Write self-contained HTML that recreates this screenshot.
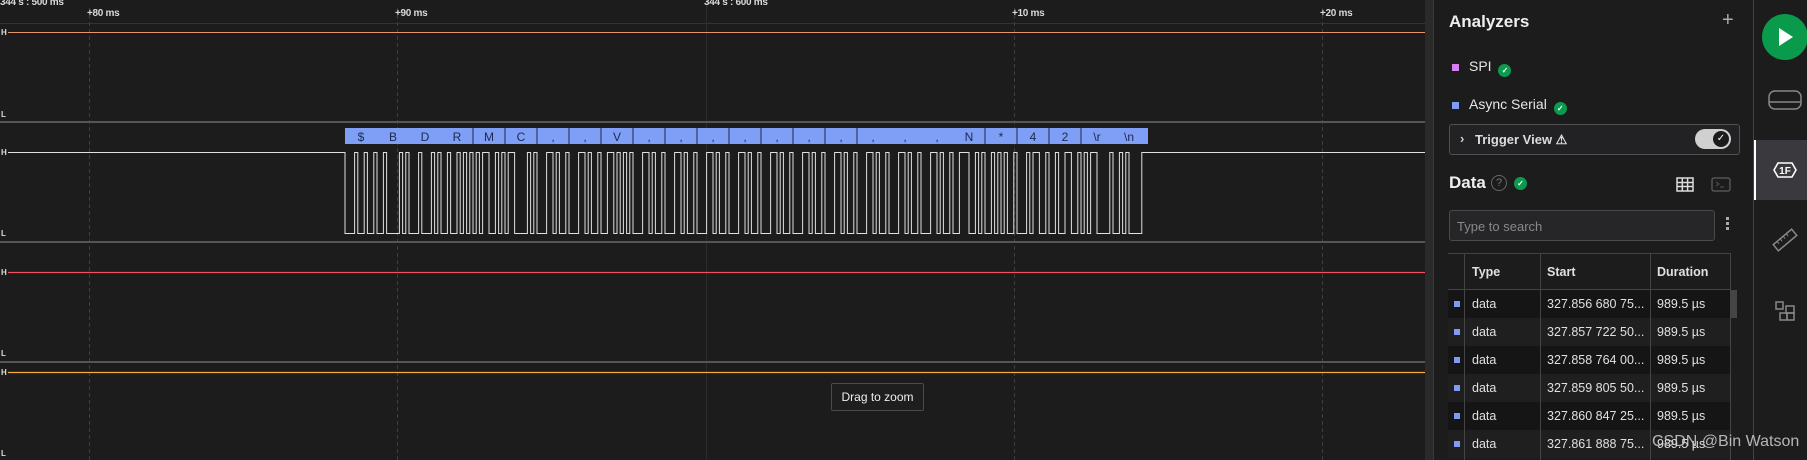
<!DOCTYPE html>
<html><head><meta charset="utf-8"><style>
*{margin:0;padding:0;box-sizing:border-box}
body{width:1807px;height:460px;background:#1c1c1c;overflow:hidden;position:relative;font-family:"Liberation Sans",sans-serif;color:#e6e6e6}
.abs{position:absolute}
.tl{font-size:10px;font-weight:bold;color:#d8d8d8;letter-spacing:-0.3px}
.hl{font-size:8px;font-weight:bold;color:#ddd}
.panel{left:1433px;top:0;width:320px;height:460px;background:#1c1c1c;border-left:1px solid #3a3a3a}
.side{left:1753px;top:0;width:54px;height:460px;background:#1c1c1c;border-left:1px solid #444}
.chk{width:13px;height:13px;border-radius:50%;background:#0c9b4e;display:inline-block;color:#fff;font-size:8px;line-height:13px;text-align:center;font-weight:bold}
.row{position:absolute;left:1448px;width:282px;height:28px;font-size:12.5px;color:#e0e0e0}
.row span{position:absolute;top:7px}
</style></head><body>
<svg class="abs" style="left:0;top:0" width="1433" height="460">
<line x1="0" y1="23.5" x2="1425" y2="23.5" stroke="#333" stroke-width="1"/>
<g stroke="#3d3d3d" stroke-width="1" stroke-dasharray="4,3">
<line x1="89.5" y1="8" x2="89.5" y2="460"/>
<line x1="397.5" y1="8" x2="397.5" y2="460"/>
<line x1="1014.5" y1="8" x2="1014.5" y2="460"/>
<line x1="1322.5" y1="8" x2="1322.5" y2="460"/>
</g>
<line x1="706.5" y1="0" x2="706.5" y2="460" stroke="#2c2c2c" stroke-width="1"/>
<rect x="0" y="121" width="1425" height="2" fill="#555"/>
<rect x="0" y="241" width="1425" height="2" fill="#555"/>
<rect x="0" y="361" width="1425" height="2" fill="#555"/>
<line x1="8" y1="32.5" x2="1425" y2="32.5" stroke="#e8946a" stroke-width="1"/>
<line x1="8" y1="272.5" x2="1425" y2="272.5" stroke="#f0505a" stroke-width="1.2"/>
<line x1="8" y1="372.5" x2="1425" y2="372.5" stroke="#f5a742" stroke-width="1.2"/>
<path id="wave" d="" fill="none" stroke="#e0e0e0" stroke-width="1"/>
<g id="bar"></g>
<rect x="1425" y="0" width="8" height="460" fill="#2a2a2a"/>
</svg>
<div class="abs tl" style="left:0;top:-3px">344 s : 500 ms</div>
<div class="abs tl" style="left:87px;top:8px">+80 ms</div>
<div class="abs tl" style="left:395px;top:8px">+90 ms</div>
<div class="abs tl" style="left:704px;top:-3px">344 s : 600 ms</div>
<div class="abs tl" style="left:1012px;top:8px">+10 ms</div>
<div class="abs tl" style="left:1320px;top:8px">+20 ms</div>
<div class="abs hl" style="left:1px;top:28px">H</div><div class="abs hl" style="left:1px;top:110px">L</div>
<div class="abs hl" style="left:1px;top:148px">H</div><div class="abs hl" style="left:1px;top:229px">L</div>
<div class="abs hl" style="left:1px;top:268px">H</div><div class="abs hl" style="left:1px;top:349px">L</div>
<div class="abs hl" style="left:1px;top:368px">H</div><div class="abs hl" style="left:1px;top:449px">L</div>
<div class="abs" style="left:831px;top:383px;width:93px;height:28px;background:#1e1e1e;border:1px solid #4a4a4e;border-radius:2px;font-size:12px;color:#eee;text-align:center;line-height:26px">Drag to zoom</div>

<div class="abs panel">
 <div class="abs" style="left:15px;top:12px;font-size:17px;font-weight:bold;color:#eee">Analyzers</div>
 <div class="abs" style="left:288px;top:9px;font-size:20px;color:#aaa">+</div>
 <div class="abs" style="left:18px;top:64px;width:7px;height:7px;background:#d77ef2"></div>
 <div class="abs" style="left:35px;top:58px;font-size:14px">SPI <span class="chk" style="vertical-align:-2px;margin-left:3px">✓</span></div>
 <div class="abs" style="left:18px;top:102px;width:7px;height:7px;background:#7f9cf5"></div>
 <div class="abs" style="left:35px;top:96px;font-size:14px">Async Serial <span class="chk" style="vertical-align:-2px;margin-left:3px">✓</span></div>
 <div class="abs" style="left:15px;top:124px;width:291px;height:31px;border:1px solid #505050;border-radius:3px;background:#222224">
  <div class="abs" style="left:10px;top:6px;font-size:13px;color:#ccc;font-weight:bold">›</div>
  <div class="abs" style="left:25px;top:7px;font-size:13px;font-weight:bold;color:#ddd">Trigger View ⚠</div>
  <div class="abs" style="left:245px;top:4px;width:36px;height:20px;border-radius:10px;background:#d0d0d0"><div class="abs" style="left:18px;top:2px;width:16px;height:16px;border-radius:50%;background:#1c1c1c;color:#fff;font-size:10px;text-align:center;line-height:16px">✓</div></div>
 </div>
 <div class="abs" style="left:15px;top:173px;font-size:17px;font-weight:bold;color:#eee">Data</div>
 <div class="abs" style="left:57px;top:175px;width:16px;height:16px;border:1px solid #666;border-radius:50%;font-size:11px;color:#777;text-align:center;line-height:14px">?</div>
 <div class="abs chk" style="left:80px;top:177px">✓</div>
 <svg class="abs" style="left:240px;top:176px" width="60" height="18"><g fill="none" stroke="#ddd" stroke-width="1.5"><rect x="3" y="2" width="16" height="13"/><path d="M3 6.5h16M3 10.5h16M8.3 2v13M13.6 2v13"/></g><rect x="38" y="2" width="18" height="13" rx="2" fill="none" stroke="#555" stroke-width="1.5"/><path d="M42 6l3 2-3 2M46 11h4" stroke="#555" fill="none"/></svg>
 <div class="abs" style="left:15px;top:210px;width:266px;height:31px;background:#262628;border:1px solid #4a4a4a;border-radius:3px;font-size:13px;color:#888;padding:8px 7px">Type to search</div>
 <div class="abs" style="left:292px;top:217px;width:3px;height:3px;background:#aaa;box-shadow:0 5px #aaa,0 10px #aaa"></div>
</div>

<div class="abs" style="left:1448px;top:253px;width:282px;height:1px;background:#444"></div>
<div class="abs" style="left:1448px;top:289px;width:282px;height:1px;background:#444"></div>
<div class="row" style="top:254px;height:35px;font-weight:bold;font-size:12.5px"><span style="left:24px;top:11px">Type</span><span style="left:99px;top:11px">Start</span><span style="left:209px;top:11px">Duration</span></div>
<div id="rows"></div>
<div class="abs" style="left:1464px;top:253px;width:1px;height:207px;background:#444"></div>
<div class="abs" style="left:1540px;top:253px;width:1px;height:207px;background:#444"></div>
<div class="abs" style="left:1650px;top:253px;width:1px;height:207px;background:#444"></div>
<div class="abs" style="left:1730px;top:253px;width:1px;height:207px;background:#444"></div>
<div class="abs" style="left:1730px;top:290px;width:7px;height:28px;background:#454545"></div>

<div class="abs side">
 <div class="abs" style="left:8px;top:14px;width:46px;height:46px;border-radius:50%;background:#0a9a4c"></div>
 <svg class="abs" style="left:0;top:0" width="54" height="340">
  <path d="M25 28v18l14-9z" fill="#fff"/>
  <rect x="15" y="91" width="32" height="18" rx="6" fill="none" stroke="#888" stroke-width="1.5"/><line x1="15" y1="102" x2="47" y2="102" stroke="#888" stroke-width="1.5"/>
  <rect x="0" y="140" width="54" height="60" fill="#3a3a3e"/><rect x="0" y="140" width="2" height="60" fill="#fff"/>
  <path d="M20 170l4-7h14l4 7-4 7H24z" fill="none" stroke="#fff" stroke-width="1.6"/>
  <text x="31" y="174" font-size="10" font-weight="bold" fill="#fff" text-anchor="middle" font-family="Liberation Sans">1F</text>
  <g transform="translate(31,240) rotate(-40)"><rect x="-12" y="-4" width="24" height="8" fill="none" stroke="#888" stroke-width="1.5"/><path d="M-7-4v3M-3-4v3M1-4v3M5-4v3" stroke="#888"/></g>
  <rect x="22" y="302" width="7" height="7" fill="none" stroke="#888" stroke-width="1.5"/><rect x="32" y="306" width="8" height="7" fill="none" stroke="#888" stroke-width="1.5"/><rect x="26" y="313" width="7" height="7" fill="none" stroke="#888" stroke-width="1.5"/><rect x="33" y="313" width="7" height="7" fill="none" stroke="#888" stroke-width="1.5"/>
 </svg>
</div>
<div class="abs" style="left:1652px;top:433px;font-size:16px;color:#d0d0d0;opacity:.85;z-index:10;white-space:nowrap">CSDN @Bin Watson</div>
<script>
var chars=['$','B','D','R','M','C',',',',','V',',',',',',',',',',',',',',',',',',',',','N','*','4','2','\r','\n'];
var x0=345,bw=3.2,hi=152.5,lo=233.5,d='M8 '+hi+' L'+x0+' '+hi,cur=1,x=x0;
chars.forEach(function(c,i){var b=c.charCodeAt(0);var bits=[0];for(var k=0;k<8;k++)bits.push((b>>k)&1);bits.push(1);
 bits.forEach(function(v,j){var xx=x0+i*32+j*bw;if(v!=cur){d+=' L'+xx.toFixed(1)+' '+(cur?hi:lo)+' L'+xx.toFixed(1)+' '+(v?hi:lo);cur=v;}});});
var xe=x0+25*32;if(cur==0)d+=' L'+xe+' '+lo+' L'+xe+' '+hi;d+=' L1425 '+hi;
document.getElementById('wave').setAttribute('d',d);
var ns='http://www.w3.org/2000/svg',g=document.getElementById('bar');
var r=document.createElementNS(ns,'rect');r.setAttribute('x',x0);r.setAttribute('y',128);r.setAttribute('width',803);r.setAttribute('height',16);r.setAttribute('fill','#7f9ef5');g.appendChild(r);
var divs=[4,5,6,7,8,9,10,11,12,13,14,15,16,20,21,22,23];
divs.forEach(function(i){var l=document.createElementNS(ns,'rect');l.setAttribute('x',x0+i*32-0.5);l.setAttribute('y',128);l.setAttribute('width',1);l.setAttribute('height',16);l.setAttribute('fill','#1c2a50');g.appendChild(l);});
chars.forEach(function(c,i){var t=document.createElementNS(ns,'text');t.setAttribute('x',x0+i*32+16);t.setAttribute('y',141);t.setAttribute('text-anchor','middle');t.setAttribute('font-size','12');t.setAttribute('font-family','Liberation Sans');t.setAttribute('fill','#1c2a50');t.textContent=c=='\r'?'\\r':c=='\n'?'\\n':c;g.appendChild(t);});
var starts=['327.856 680 75...','327.857 722 50...','327.858 764 00...','327.859 805 50...','327.860 847 25...','327.861 888 75...'];
var h='';starts.forEach(function(s,i){var top=290+i*28;h+='<div class="row" style="top:'+top+'px;background:'+(i%2?'#1f1f1f':'#151515')+'"><div style="position:absolute;left:6px;top:11px;width:6px;height:6px;background:#7f9cf5"></div><span style="left:24px">data</span><span style="left:99px">'+s+'</span><span style="left:209px">989.5 µs</span></div>';});
document.getElementById('rows').innerHTML=h;
</script>
</body></html>
